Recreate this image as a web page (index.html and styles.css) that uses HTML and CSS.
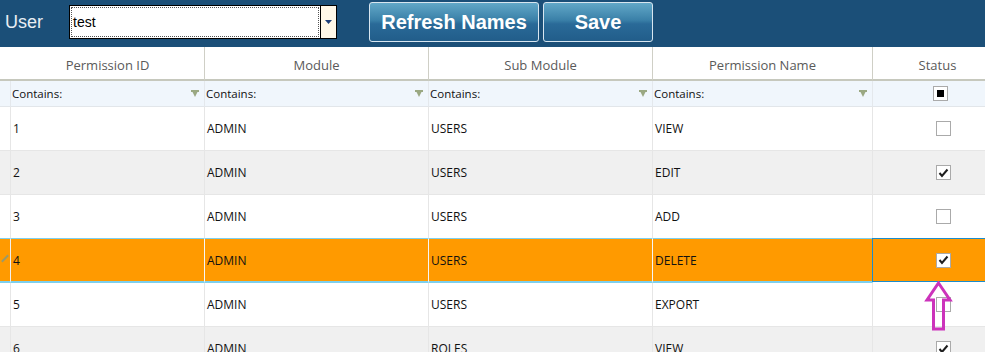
FILE: index.html
```html
<!DOCTYPE html>
<html lang="en">
  <head>
    <meta charset="UTF-8" />
    <title>User Permissions</title>
    <link rel="stylesheet" href="styles.css">
  </head>
  <body>
    <div class="toolbar">
      <span class="user-label">User</span>
      <div class="combo">
        <div class="combo-text">test</div>
        <div class="combo-btn">
          <svg width="7" height="4" viewBox="0 0 7 4"><path d="M0 0h7L3.5 4z" fill="#1d3f7a"/></svg>
        </div>
      </div>
      <button class="tool-btn refresh">Refresh Names</button>
      <button class="tool-btn save">Save</button>
    </div>

    <div class="grid">
      <div class="hdr ind"></div>
      <div class="hdr">Permission ID</div>
      <div class="hdr">Module</div>
      <div class="hdr">Sub Module</div>
      <div class="hdr">Permission Name</div>
      <div class="hdr">Status</div>

      <div class="flt ind"></div>
      <div class="flt"><span>Contains:</span><i class="funnel"></i></div>
      <div class="flt"><span>Contains:</span><i class="funnel"></i></div>
      <div class="flt"><span>Contains:</span><i class="funnel"></i></div>
      <div class="flt"><span>Contains:</span><i class="funnel"></i></div>
      <div class="flt center"><span class="chk partial"></span></div>
    </div>

    <div class="grid rows" id="rows"></div>

    <svg class="arrow" width="30" height="50" viewBox="0 0 30 50">
      <path d="M14.5 2 L26 19 H19.5 V48 H9.5 V19 H3 Z" fill="none" stroke="#cc33bb" stroke-width="3" stroke-linejoin="miter"/>
    </svg>

    <script>
      const data = [
        [1, "ADMIN", "USERS", "VIEW", false],
        [2, "ADMIN", "USERS", "EDIT", true],
        [3, "ADMIN", "USERS", "ADD", false],
        [4, "ADMIN", "USERS", "DELETE", true],
        [5, "ADMIN", "USERS", "EXPORT", false],
        [6, "ADMIN", "ROLES", "VIEW", true],
      ];
      const tick = '<svg width="11" height="10" viewBox="0 0 11 10"><path d="M1.5 5 L4 8 L9.5 1.5" fill="none" stroke="#1e1e1e" stroke-width="2"/></svg>';
      const rows = document.getElementById("rows");
      data.forEach(function (r, i) {
        const cls = "cell" + (i % 2 ? " alt" : "") + (i === 3 ? " sel" : "");
        let html = '<div class="' + cls + ' ind">' + (i === 3 ? '<span class="pencil"></span>' : "") + "</div>";
        for (let c = 0; c < 4; c++) {
          html += '<div class="' + cls + '">' + r[c] + "</div>";
        }
        html += '<div class="' + cls + ' center' + (i === 3 ? " current" : "") + '"><span class="chk">' + (r[4] ? tick : "") + "</span></div>";
        rows.insertAdjacentHTML("beforeend", html);
      });
    </script>
  </body>
</html>
```

FILE: styles.css
```css
body {
  margin: 0;
  width: 985px;
  height: 352px;
  overflow: hidden;
  position: relative;
  background: #fff;
  font-family: "Open Sans", "Noto Sans", sans-serif;
}

.toolbar {
  height: 47px;
  background: #1b4f78;
  display: flex;
  align-items: flex-start;
}

.user-label {
  font-family: "Liberation Sans", Arial, sans-serif;
  font-size: 18px;
  color: #e8eef4;
  margin: 12px 0 0 5px;
  width: 64px;
}

.combo {
  margin-top: 5px;
  width: 266px;
  height: 32px;
  border: 1px solid #000;
  display: flex;
  background: #fff;
}

.combo-text {
  flex: 1;
  margin: 1px;
  border: 1px dotted #555;
  font-family: "Liberation Sans", Arial, sans-serif;
  font-size: 14px;
  color: #000;
  padding: 6px 0 0 1px;
}

.combo-btn {
  width: 15px;
  border-left: 1px solid #000;
  background: #fff8e8;
  display: flex;
  align-items: center;
  justify-content: center;
}

.tool-btn {
  margin-top: 2px;
  height: 40px;
  border: 1px solid #d8e6f0;
  border-radius: 3px;
  background: linear-gradient(#62a8c8, #3a80a8 45%, #2a6a98 55%, #215d8a);
  color: #fff;
  font-family: "Liberation Sans", Arial, sans-serif;
  font-weight: bold;
  font-size: 20px;
  padding: 0;
}

.refresh {
  width: 170px;
  margin-left: 32px;
}

.save {
  width: 110px;
  margin-left: 4px;
}

.grid {
  display: grid;
  grid-template-columns: 11px 194px 224px 224px 220px 130px;
  width: 1003px;
}

.hdr {
  height: 34px;
  box-sizing: border-box;
  border-right: 1px solid #cfcfc6;
  border-bottom: 2px solid #c6c8bd;
  font-size: 13px;
  color: #5a5a5a;
  display: flex;
  align-items: center;
  justify-content: center;
  padding-top: 3px;
}

.hdr.ind {
  border-right: none;
}

.flt {
  height: 25px;
  background: #f0f6fc;
  border-right: 1px solid #e4e8ec;
  border-bottom: 1px solid #e2e6ea;
  font-size: 11.5px;
  color: #111;
  display: flex;
  align-items: center;
  justify-content: space-between;
  padding: 0 6px 0 1px;
}

.flt.ind {
  padding: 0;
}

.center {
  justify-content: center;
}

.funnel {
  width: 0;
  height: 0;
  border-left: 3.5px solid transparent;
  border-right: 3.5px solid transparent;
  border-top: 6px solid #9aa882;
  position: relative;
}

.funnel::before {
  content: "";
  position: absolute;
  left: -4px;
  top: -7px;
  width: 8px;
  height: 2px;
  background: #9aa882;
}

.cell {
  height: 43px;
  border-right: 1px solid #e6e6e6;
  border-bottom: 1px solid #e6e6e6;
  font-size: 12px;
  color: #111;
  display: flex;
  align-items: center;
  padding-left: 2px;
}

.cell.alt {
  background: #f0f0f0;
}

.cell.ind {
  padding: 0;
}

.cell.sel {
  background: #ff9a00;
  border-top: 1px solid #7dd0ee;
  border-bottom: 2px solid #7dd0ee;
  border-right-color: #f6f6f6;
  margin-top: -1px;
  height: 42px;
}

.cell.sel.ind {
  border-right-color: #f0f0f0;
}

.cell.current {
  border: 1px solid #1a8ccc;
  margin-left: -1px;
}

.chk {
  width: 13px;
  height: 13px;
  border: 1px solid #aaa;
  background: #fff;
  display: flex;
  align-items: center;
  justify-content: center;
  margin-left: 10px;
}

.chk.partial::after {
  content: "";
  width: 7px;
  height: 7px;
  background: #000;
}

.pencil {
  width: 2px;
  height: 9px;
  background: #9a9a6a;
  transform: rotate(45deg);
  margin-left: 4px;
  margin-top: -4px;
}

.arrow {
  position: absolute;
  left: 924px;
  top: 281px;
}
```
